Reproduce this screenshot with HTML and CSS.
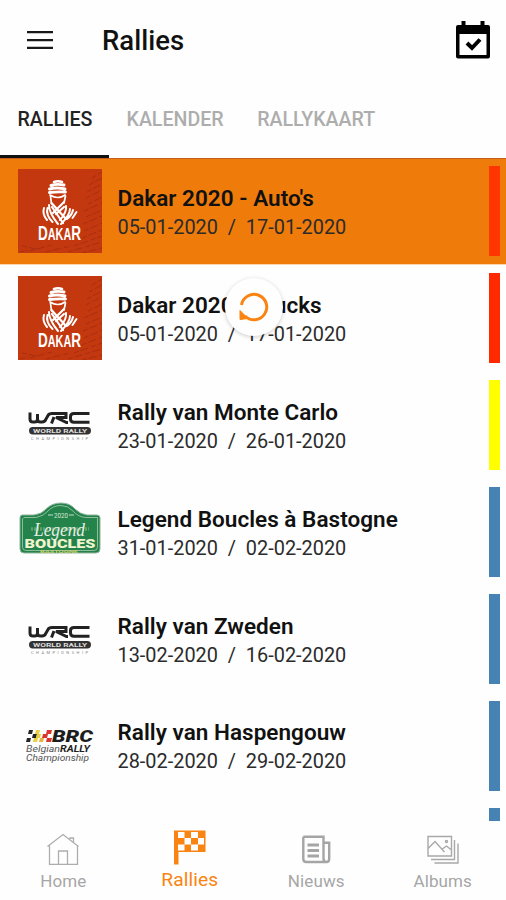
FILE: index.html
```html
<!DOCTYPE html>
<html lang="nl">
<head>
    <meta charset="UTF-8">
    <meta name="viewport" content="width=device-width, initial-scale=1.0">
    <title>Rallies</title>
    <link rel="stylesheet" href="styles.css">
</head>
<body>

    <!-- shared logos -->
    <svg class="defs" width="0" height="0">
        <symbol id="dakar" viewBox="0 0 84 84">
            <rect width="84" height="84" fill="#c3380f"/>
            <g stroke="#9c2c12" stroke-width="1" stroke-dasharray="5 2 8 3" opacity=".7">
                <path d="M74 9L84 3M71 16L84 9M69 23L84 15M68 29L84 21M70 35L84 28M66 42L84 34M68 48L84 41M65 55L84 47M66 62L84 54M64 69L84 61M56 77L84 67M50 83L84 73M64 84L84 79M4 77L18 80M12 82L34 76M28 83L52 77M2 83L10 81"/>
            </g>
            <g fill="none" stroke="#fff" stroke-linecap="round">
                <path d="M36 13q4-1.500 8 0" stroke-width="2.600"/>
                <path d="M33 16.500q6-2 13-.5M31.500 20q7-2 15.500 0M31.500 23.500q8-1 16-.5" stroke-width="2.900"/>
                <path d="M32 26q8 5 15 0M32.500 27l1 8M47.500 27l-1.500 7" stroke-width="1.700"/>
                <path d="M33.500 34L48 50M46 33L35 44M34 38L45 54M46 38L38 45" stroke-width="2.200"/>
                <path d="M31 36q0 8 9 19M48 37q1 6-6 14M29.500 39q-2 7 5 14" stroke-width="2"/>
                <path d="M26 39q-2 6 3 12M52 40q0 6-9 15M55 41q-1 5-6 9M58.500 43l-4 6" stroke-width="2"/>
            </g>
            <text class="dakar-text" x="20" y="71" textLength="43" lengthAdjust="spacingAndGlyphs"><tspan class="big">D</tspan>AKA<tspan class="big">R</tspan></text>
        </symbol>
        <symbol id="wrc" viewBox="0 0 84 84">
            <path d="M12 29.500V36Q12 39 15 39H16.500Q19.500 39 19.500 36V31V36Q19.500 39 22.500 39H24Q27 39 28 36L30 32.500Q31 30.500 34 30.500H48V34.500H38L48.500 39.500H50M33.500 40.500L36 34" fill="none" stroke="#222" stroke-width="3"/>
            <path d="M71.500 30.500H56Q52.500 30.500 52.500 33.500V36Q52.500 39.300 56 39.300H71.500" fill="none" stroke="#222" stroke-width="3"/>
            <rect x="11" y="44" width="62" height="7.500" rx="3.700" fill="#333"/>
            <text class="wrc-world" x="15" y="50" textLength="54" lengthAdjust="spacingAndGlyphs">WORLD RALLY</text>
            <text class="wrc-champ" x="13" y="56.500" textLength="57" lengthAdjust="spacing">CHAMPIONSHIP</text>
        </symbol>
    </svg>

    <div class="app">
        <header class="header">
            <svg class="menu-icon" viewBox="0 0 26 18">
                <path d="M0 1.200H26M0 9.200H26M0 16.800H26" stroke="#181818" stroke-width="2.200"/>
            </svg>
            <h1 class="title">Rallies</h1>
            <svg class="calendar-icon" viewBox="0 0 34 38">
                <path d="M2 4H5.500V0H9.500V4H24.500V0H28.500V4H32Q34 4 34 6V35.500Q34 37.500 32 37.500H2Q0 37.500 0 35.500V6Q0 4 2 4Z"/>
                <path d="M3.500 13H30.500V34H3.500Z" fill="#fff"/>
                <path d="M11 22L16 27L24 18.500" fill="none" stroke="#000" stroke-width="4"/>
            </svg>
        </header>

        <nav class="tabs">
            <a class="tab active"><span class="tab-text">RALLIES</span></a>
            <a class="tab"><span class="tab-text">KALENDER</span></a>
            <a class="tab"><span class="tab-text">RALLYKAART</span></a>
        </nav>

        <main class="list">
            <div class="rally selected">
                <svg class="logo"><use href="#dakar"/></svg>
                <div class="info">
                    <div class="name">Dakar 2020 - Auto's</div>
                    <div class="date">05-01-2020&nbsp; /&nbsp; 17-01-2020</div>
                </div>
                <div class="status red"></div>
            </div>
            <div class="rally">
                <svg class="logo"><use href="#dakar"/></svg>
                <div class="info">
                    <div class="name">Dakar 2020 - Trucks</div>
                    <div class="date">05-01-2020&nbsp; /&nbsp; 17-01-2020</div>
                </div>
                <div class="status red"></div>
            </div>
            <div class="rally">
                <svg class="logo"><use href="#wrc"/></svg>
                <div class="info">
                    <div class="name">Rally van Monte Carlo</div>
                    <div class="date">23-01-2020&nbsp; /&nbsp; 26-01-2020</div>
                </div>
                <div class="status yellow"></div>
            </div>
            <div class="rally">
                <svg class="logo" viewBox="0 3 84 84">
                    <path d="M4 28H16Q24 27 28 22Q34 16 43 16Q52 16 57 22Q62 27 69 28H79Q82 28 82 31V62Q82 66 78 66H6Q2 66 2 62V31Q2 28 4 28Z" fill="#23834a" stroke="#8fb59b" stroke-width="1"/>
                    <path d="M6 30.500H18Q26 29 30 24Q35 18.500 43 18.500Q50 18.500 55 24Q60 30 68 30.500H79.500V60Q79.500 63.500 76 63.500H8Q4.500 63.500 4.500 60V32Z" fill="none" stroke="#a9cbb3" stroke-width=".8"/>
                    <path d="M13 42H71" fill="none" stroke="#5fa36c" stroke-width="3.500" stroke-dasharray="2 1"/>
                    <path d="M30 28H35M51 28H56" stroke="#c9dfcf"/>
                    <text class="legend-year" x="36" y="30.500" textLength="14" lengthAdjust="spacingAndGlyphs">2020</text>
                    <text class="legend-script" x="16" y="49" textLength="51" lengthAdjust="spacingAndGlyphs">Legend</text>
                    <text class="legend-boucles" x="6.500" y="61" textLength="71" lengthAdjust="spacingAndGlyphs">BOUCLES</text>
                    <text class="legend-town" x="22" y="65.500" textLength="38" lengthAdjust="spacingAndGlyphs">BASTOGNE</text>
                </svg>
                <div class="info">
                    <div class="name">Legend Boucles à Bastogne</div>
                    <div class="date">31-01-2020&nbsp; /&nbsp; 02-02-2020</div>
                </div>
                <div class="status blue"></div>
            </div>
            <div class="rally">
                <svg class="logo"><use href="#wrc"/></svg>
                <div class="info">
                    <div class="name">Rally van Zweden</div>
                    <div class="date">13-02-2020&nbsp; /&nbsp; 16-02-2020</div>
                </div>
                <div class="status blue"></div>
            </div>
            <div class="rally">
                <svg class="logo" viewBox="0 3 84 84">
                    <path d="M11 29h4l-1 4h-4zM15 33h4l-1 4h-4zM9 37h4l-1 4H8z" fill="#252525"/>
                    <path d="M18 29h4l-1 4h-4zM23 33h-4l-1 4h4zM16 37h4l-1 4h-4z" fill="#e9d03f"/>
                    <path d="M29 29h5l-1 4h-5zM25 33h5l-1 4h-5zM29 37h5l-1 4h-5z" fill="#d8362e"/>
                    <path d="M22 37h4l-1 4h-4z" fill="#efb13b"/>
                    <text class="brc-name" x="34" y="41" textLength="41" lengthAdjust="spacingAndGlyphs">BRC</text>
                    <text class="brc-text" x="8" y="51" textLength="34" lengthAdjust="spacingAndGlyphs">Belgian</text>
                    <text class="brc-text heavy" x="42" y="51" textLength="30" lengthAdjust="spacingAndGlyphs">RALLY</text>
                    <text class="brc-text" x="8" y="60" textLength="63" lengthAdjust="spacingAndGlyphs">Championship</text>
                </svg>
                <div class="info">
                    <div class="name">Rally van Haspengouw</div>
                    <div class="date">28-02-2020&nbsp; /&nbsp; 29-02-2020</div>
                </div>
                <div class="status blue"></div>
            </div>
            <div class="rally">
                <div class="status blue"></div>
            </div>

            <div class="refresh">
                <svg width="58" height="58" viewBox="0 0 58 58" fill="none" stroke="#fa8412">
                    <path d="M16.500 27A12.700 12.700 0 1 1 20 38" stroke-width="3"/>
                    <path d="M15 32.500V41.500L23 40.500Z" fill="#fa8412" stroke-width="1"/>
                </svg>
            </div>
        </main>

        <footer class="bottom-nav">
            <a class="nav-item">
                <svg class="nav-icon" viewBox="0 0 36 36" fill="none" stroke="#adadad" stroke-width="1.300">
                    <path d="M2.500 17.500L18 5.500L33.500 17.500M4.500 16V35.300H32.500V16M13.500 35V22H22.500V35M25 10V9H28.500V13"/>
                </svg>
                <span class="nav-label">Home</span>
            </a>
            <a class="nav-item current">
                <svg class="nav-icon" viewBox="0 0 36 36">
                    <path d="M2 1.500H33.500V23H6.500V35.500H2Z" fill="#fa8412"/>
                    <path d="M6 3H12.500V9H6ZM19 3H26V9H19ZM12.500 9H19V15.500H12.500ZM26 9H32V15.500H26ZM6 15.500H12.500V21.500H6ZM19 15.500H26V21.500H19Z" fill="#fff"/>
                </svg>
                <span class="nav-label">Rallies</span>
            </a>
            <a class="nav-item">
                <svg class="nav-icon" viewBox="0 0 36 36" fill="none" stroke="#a5a5a5" stroke-width="2.400">
                    <path d="M5.300 7.800H25.500V29.500Q25.500 33 28.700 33Q31.200 33 31.200 29.500V13.800H25.500M28.500 33H8.300Q5.300 33 5.300 30V7.800"/>
                    <path d="M9.500 16H21M9.500 21.500H21M9.500 27H21" stroke-width="2.800"/>
                </svg>
                <span class="nav-label">Nieuws</span>
            </a>
            <a class="nav-item">
                <svg class="nav-icon" viewBox="0 0 36 36" fill="none" stroke="#a8a8a8" stroke-width="1.400">
                    <path d="M3 7.500H26.500V27H3ZM3 19.500L10 12.500L19.500 23M16.500 20.500L21.500 17L26.500 21M29.500 11V30.500H6M33 14.500V34H9.500"/>
                    <circle cx="21.500" cy="12.500" r="1"/>
                </svg>
                <span class="nav-label">Albums</span>
            </a>
        </footer>
    </div>

</body>
</html>
```
FILE: styles.css
```css
* {
    box-sizing: border-box;
}
body {
    margin: 0;
    font-family: Roboto, "Liberation Sans", sans-serif;
    background: #fefefe;
    color: #111;
}
.defs {
    position: absolute;
}
.app {
    height: 900px;
    display: flex;
    flex-direction: column;
    overflow: hidden;
}
.header {
    height: 80px;
    padding: 2px 16px 0 27px;
    display: flex;
    align-items: center;
    flex-shrink: 0;
}
.menu-icon {
    width: 26px;
    height: 18px;
    margin-top: -3px;
}
.title {
    margin: -2px auto 0 49px;
    font-size: 27.5px;
    font-weight: 500;
}
.calendar-icon {
    width: 34px;
    height: 38px;
    margin-top: -2px;
}
.tabs {
    height: 78px;
    display: flex;
    flex-shrink: 0;
}
.tab {
    padding: 0 16px 0 17.5px;
    display: flex;
    align-items: center;
    font-size: 19.6px;
    font-weight: 500;
    color: #adadad;
    border-bottom: 3px solid transparent;
}
.tab.active {
    width: 109px;
    color: #222;
    border-bottom-color: #111;
}
.tab-text {
    padding-top: 4px;
}
.list {
    height: 663px;
    position: relative;
    overflow: hidden;
    flex-shrink: 0;
}
.rally {
    height: 106.9px;
    padding: 0 6px 0 18px;
    display: flex;
    align-items: center;
}
.rally.selected {
    background: #ef7b0b;
    border-top: 1px solid #c75d1d;
    border-bottom: 1px solid #fbd5b0;
}
.logo {
    width: 84px;
    height: 84px;
    flex-shrink: 0;
}
.info {
    margin-left: 15.5px;
    padding-top: 3px;
}
.name {
    margin-bottom: 2px;
    font-size: 22.5px;
    line-height: 28px;
    font-weight: 600;
    letter-spacing: 0.03px;
    white-space: nowrap;
}
.date {
    font-size: 19.9px;
    line-height: 28px;
    color: #2b2b2b;
    white-space: nowrap;
}
.status {
    width: 11px;
    height: 90px;
    margin-left: auto;
}
.red {
    background: #ff2a00;
}
.selected .red {
    background: #ff3600;
}
.yellow {
    background: #ffff00;
}
.blue {
    background: #4682b4;
}
.refresh {
    position: absolute;
    left: 225px;
    top: 120px;
    width: 58px;
    height: 58px;
    border-radius: 50%;
    background: #fefefe;
    box-shadow: 0 1px 4px rgba(0, 0, 0, 0.2);
}
.bottom-nav {
    flex: 1;
    padding-top: 8px;
    display: flex;
}
.nav-item {
    width: 25%;
    display: flex;
    flex-direction: column;
    align-items: center;
    color: #a6a6a6;
}
.nav-icon {
    width: 36px;
    height: 36px;
}
.nav-label {
    margin-top: 4px;
    font-size: 17px;
    line-height: 24px;
    letter-spacing: 0.1px;
}
.nav-item.current {
    color: #fa8412;
}
.current .nav-label {
    margin-top: 3px;
    font-size: 19.2px;
}

/* logo lettering */
.dakar-text {
    fill: #fff;
    font-family: "Liberation Sans", sans-serif;
    font-size: 16px;
    font-weight: bold;
}
.dakar-text .big {
    font-size: 20px;
}
.wrc-world {
    fill: #ddd;
    font-size: 6px;
    font-weight: bold;
}
.wrc-champ {
    fill: #888;
    font-size: 4px;
}
.legend-year {
    fill: #d5e8d8;
    font-size: 7px;
}
.legend-script {
    fill: #e5eee5;
    font-family: "Liberation Serif", serif;
    font-size: 19px;
    font-style: italic;
}
.legend-boucles {
    fill: #f2f3cf;
    font-size: 12px;
    font-weight: 900;
}
.legend-town {
    fill: #c6cf68;
    font-size: 4px;
    font-weight: bold;
}
.brc-name {
    fill: #1d1d1d;
    font-size: 16px;
    font-weight: 900;
    font-style: italic;
}
.brc-text {
    fill: #555;
    font-size: 9px;
    font-style: italic;
}
.brc-text.heavy {
    fill: #222;
    font-weight: bold;
}
```
